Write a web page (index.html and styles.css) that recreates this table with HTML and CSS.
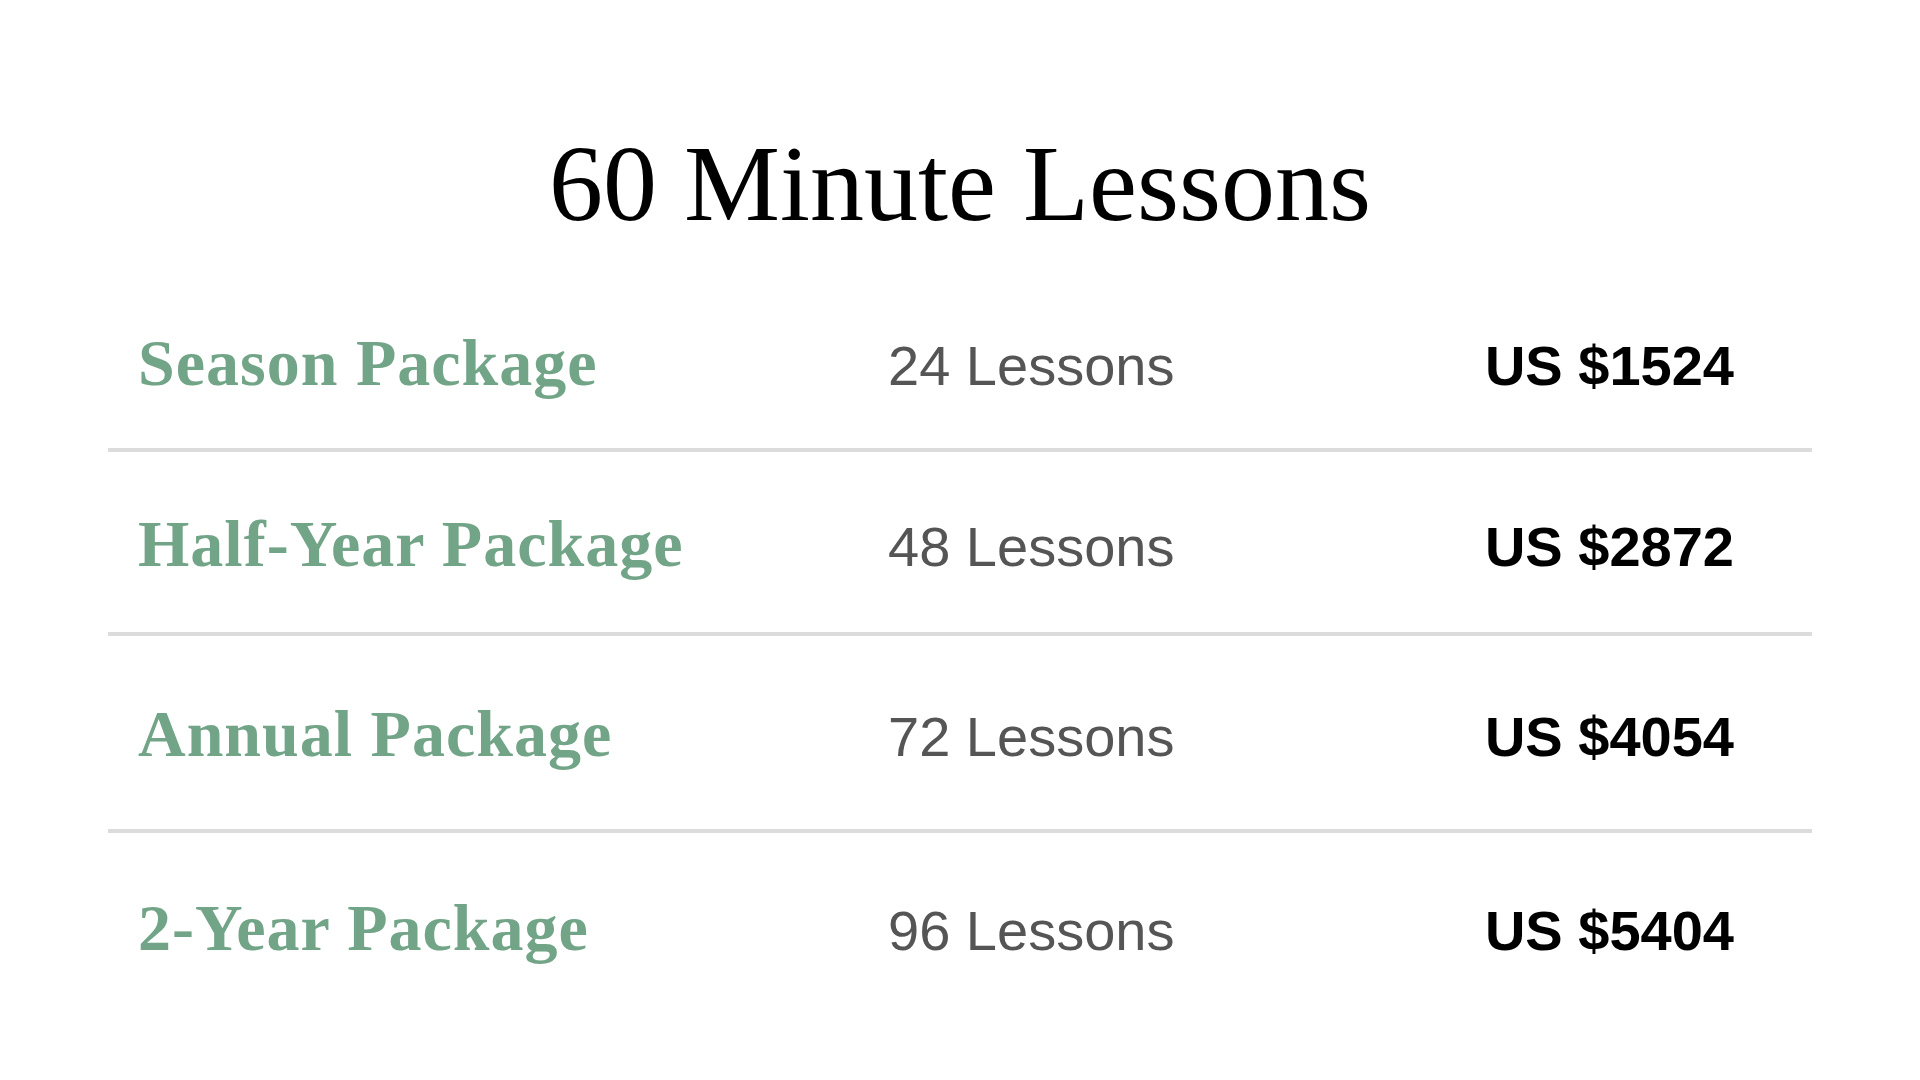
FILE: index.html
```html
<!DOCTYPE html>
<html lang="en">
<head>
<meta charset="utf-8">
<title>60 Minute Lessons</title>
<link rel="stylesheet" href="styles.css">
</head>
<body>
<main class="page">
  <h1 class="title">60 Minute Lessons</h1>
  <section class="table">
    <div class="row row-season">
      <div class="name">Season Package</div>
      <div class="lessons">24 Lessons</div>
      <div class="price">US $1524</div>
    </div>
    <div class="row row-half">
      <div class="name">Half-Year Package</div>
      <div class="lessons">48 Lessons</div>
      <div class="price">US $2872</div>
    </div>
    <div class="row row-annual">
      <div class="name">Annual Package</div>
      <div class="lessons">72 Lessons</div>
      <div class="price">US $4054</div>
    </div>
    <div class="row row-two">
      <div class="name">2-Year Package</div>
      <div class="lessons">96 Lessons</div>
      <div class="price">US $5404</div>
    </div>
  </section>
</main>
</body>
</html>
```

FILE: styles.css
```css
html, body {
  margin: 0;
  padding: 0;
  background: #ffffff;
}

.page {
  width: 1920px;
  height: 1080px;
  padding-top: 130px;
  box-sizing: border-box;
}

.title {
  margin: 0 0 28px 0;
  font-family: "Liberation Serif", "Times New Roman", serif;
  font-weight: 400;
  font-size: 108px;
  line-height: 1;
  color: #000000;
  text-align: center;
}

.table {
  width: 1704px;
  margin-left: 108px;
}

.row {
  display: grid;
  grid-template-columns: 750px 1fr auto;
  align-items: baseline;
  padding: 62px 78px 56px 30px;
  border-bottom: 4px solid #dcdcdc;
}

.row-season {
  padding-top: 64px;
  padding-bottom: 52px;
}

.row-half {
  padding-top: 59px;
  padding-bottom: 55px;
}

.row-annual {
  padding-top: 65px;
  padding-bottom: 62px;
}

.row-two {
  padding-top: 62px;
  border-bottom: none;
}

.name {
  font-family: "Liberation Serif", "Times New Roman", serif;
  font-weight: 700;
  font-size: 66px;
  letter-spacing: 1px;
  line-height: 1;
  color: #72a487;
}

.lessons {
  font-family: "Liberation Sans", Arial, sans-serif;
  font-weight: 400;
  font-size: 56px;
  line-height: 1;
  color: #555555;
}

.price {
  font-family: "Liberation Sans", Arial, sans-serif;
  font-weight: 700;
  font-size: 56px;
  line-height: 1;
  color: #000000;
  justify-self: end;
}
```
